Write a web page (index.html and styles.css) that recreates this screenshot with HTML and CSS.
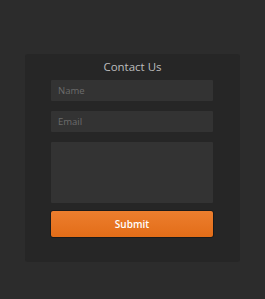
FILE: index.html
```html
<!DOCTYPE html>
<html>
<head>
<meta charset="utf-8">
<link rel="stylesheet" href="styles.css">
</head>
<body>
<form class="card">
  <h1 class="title">Contact Us</h1>
  <input class="field" type="text" placeholder="Name">
  <input class="field" type="text" placeholder="Email">
  <textarea class="field area"></textarea>
  <button class="submit" type="button">Submit</button>
</form>
</body>
</html>
```
FILE: styles.css
```css
html, body {
  margin: 0;
  padding: 0;
}
body {
  width: 265px;
  height: 299px;
  background: #2c2c2c;
  font-family: "Open Sans", "DejaVu Sans", sans-serif;
  overflow: hidden;
}
.card {
  margin: 54px 0 0 25px;
  width: 215px;
  height: 208px;
  box-sizing: border-box;
  padding: 5px 27px 0 26px;
  background: #262626;
  border-radius: 3px;
  display: flex;
  flex-direction: column;
  gap: 10px;
}
.title {
  margin: 0 0 -5px 0;
  font-size: 11.5px;
  line-height: 16px;
  font-weight: 400;
  color: #bdbdbd;
  text-align: center;
  padding-left: 1px;
}
.field {
  display: block;
  width: 162px;
  height: 21px;
  box-sizing: border-box;
  margin: 0;
  border: none;
  border-radius: 1px;
  background: #333333;
  padding: 0 7px;
  font-family: inherit;
  font-size: 9.5px;
  color: #999;
  outline: none;
}
.field::placeholder {
  color: #6c6c6c;
}
.area {
  height: 61px;
  resize: none;
}
.submit {
  margin: -3px 0 0 -1px;
  width: 164px;
  height: 28px;
  box-sizing: border-box;
  border: 1px solid #1a1a1a;
  border-radius: 3px;
  background: linear-gradient(#ec7e2e, #e36d18);
  color: #fff;
  font-family: inherit;
  font-size: 10px;
  font-weight: 600;
  padding: 0;
}
```
